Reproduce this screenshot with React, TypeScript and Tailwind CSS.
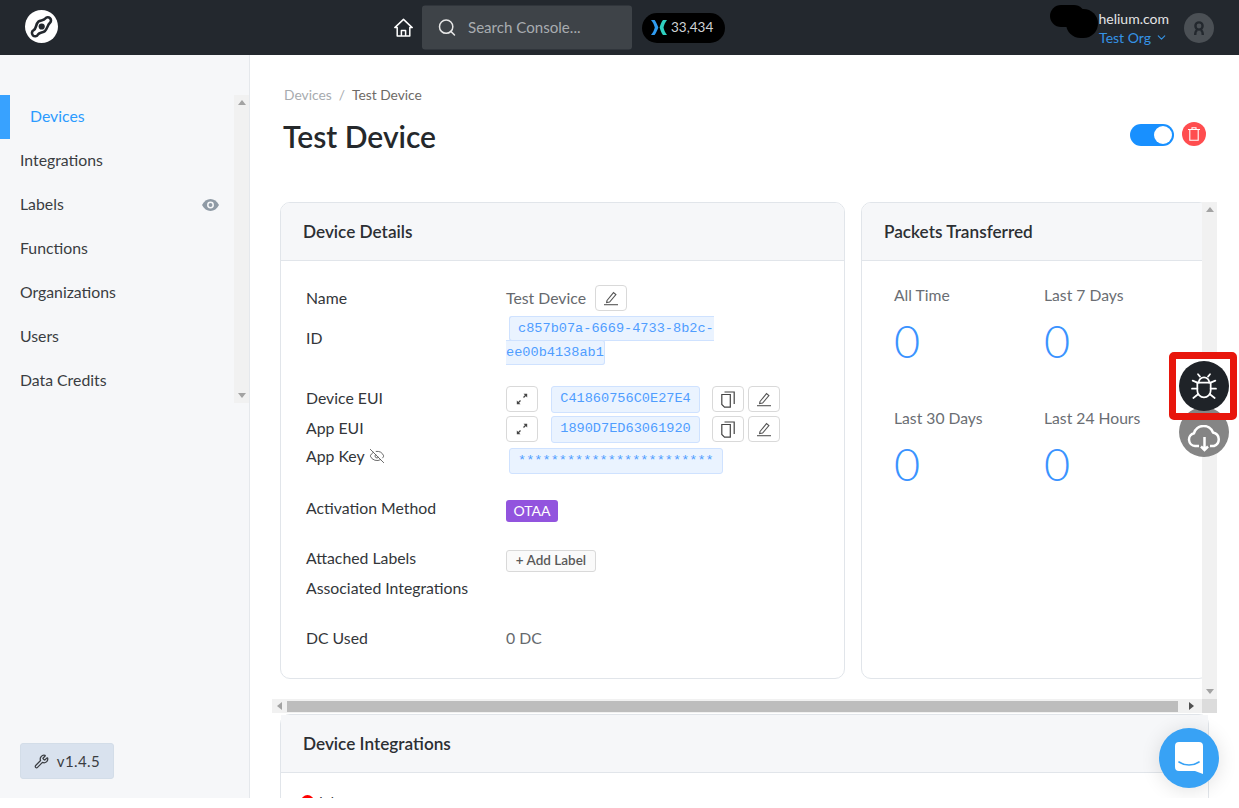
import React from "react";
import { Search, ChevronDown, EyeOff, Wrench } from "lucide-react";

const sans = "font-['Lato','Open_Sans',sans-serif]";

function Logo() {
  return (
    <svg width="33" height="33" viewBox="0 0 33 33">
      <circle cx="16.5" cy="16.5" r="16.5" fill="#fff" />
      <path
        d="M8.7 20.2C11.5 18.5 10.6 14 13.5 11.5C15.5 10 18.5 10.8 20.3 8.5A3.2 3.2 0 1 1 24.8 13C22.5 15 23 17.5 20 21C18 23 14.5 22.2 13 24.5A3.2 3.2 0 1 1 8.7 20.2Z"
        fill="none"
        stroke="#23282e"
        strokeWidth="2.6"
      />
      <circle cx="16.7" cy="16.5" r="3.1" fill="#23282e" />
    </svg>
  );
}

function HomeIcon() {
  return (
    <svg width="19" height="19" viewBox="0 0 19 19" fill="none" stroke="#fff" strokeWidth="1.5" strokeLinejoin="round">
      <path d="M.8 9.6 9.5 1.4l8.7 8.2h-2.4v8.4H3.2V9.6z" />
      <path d="M7.4 18v-5.5h4.2V18" />
    </svg>
  );
}

function DcLogo() {
  return (
    <svg width="16" height="15" viewBox="0 0 16 15">
      <path d="M0 0h3.6C5 1.6 6.4 5 7.4 7.5 6.4 10 5 13.4 3.6 15H0c2.2-2.6 3.2-5 3.8-7.5C3.2 5 2.2 2.6 0 0z" fill="#2f9bf0" />
      <path d="M16 0h-4C10.400 1.600 9.400 5 8.600 7.500 9.400 10 10.400 13.400 12 15h4c-2-2.600-3-5-3.500-7.500C13 5 14 2.600 16 0z" fill="#2fd0c0" />
    </svg>
  );
}

function EyeSolid() {
  return (
    <svg width="17" height="12" viewBox="0 0 17 12">
      <path d="M0 6C2 2.200 5 0 8.500 0S15 2.200 17 6c-2 3.800-5 6-8.500 6S2 9.800 0 6z" fill="#8f9aa5" />
      <circle cx="8.500" cy="6" r="2.700" fill="none" stroke="#f6f7f9" strokeWidth="1.500" />
    </svg>
  );
}

function NavItem({ label, active, eye }: { label: string; active?: boolean; eye?: boolean }) {
  return (
    <div className={`flex h-[44px] items-center justify-between text-[15.8px] ${active ? "border-l-[10px] border-[#38a2ff] pl-[20px] text-[#2b9bff]" : "pl-[20px] text-[#3a3d42]"}`}>
      <span className="pb-[3px]">{label}</span>
      {eye ? <span className="mr-[15px]"><EyeSolid /></span> : null}
    </div>
  );
}

function IconBtn({ children }: { children: React.ReactNode }) {
  return (
    <div className="flex h-[26px] w-[32px] shrink-0 items-center justify-center rounded-[4px] border border-[#d9d9d9] bg-white text-[#444]">
      {children}
    </div>
  );
}

function EditIcon() {
  return (
    <svg width="16" height="16" viewBox="0 0 16 16" fill="none" stroke="#555" strokeWidth="1.1">
      <path d="M4 10.500 10.500 2.600l2.400 2L6.600 12l-3 .6z" />
      <path d="M1 14.700h14" />
    </svg>
  );
}

function CopyIcon() {
  return (
    <svg width="14" height="17" viewBox="0 0 14 17" fill="none" stroke="#444" strokeWidth="1.2">
      <path d="M.8 3.500h8.500v12.700H3.500L.8 13.500z" />
      <path d="M3.500 1h9.700v12" />
    </svg>
  );
}

function ExpandIcon() {
  return (
    <svg width="12" height="12" viewBox="0 0 12 12" fill="#444" stroke="#444" strokeWidth="1.300">
      <path d="M7.500 4.500 10 2" />
      <path d="M7.500 .8H11.200V4.500z" stroke="none" />
      <path d="M4.500 7.500 2 10" />
      <path d="M4.500 11.200H.8V7.500z" stroke="none" />
    </svg>
  );
}

function Code({ children }: { children: React.ReactNode }) {
  return (
    <span className="flex h-[27px] w-[149px] items-center justify-center rounded-[3px] border border-[#cfe2ff] bg-[#eaf3ff] font-['Liberation_Mono',monospace] text-[13.6px] text-[#4f9dff]">
      {children}
    </span>
  );
}

function Row({ label, h, mt, lift, children }: { label: React.ReactNode; h: string; mt?: string; lift?: boolean; children?: React.ReactNode }) {
  return (
    <div className={`flex items-center ${h} ${mt ?? ""}`}>
      <div className={`w-[200px] shrink-0 text-[15.8px] text-[#33363a] ${lift ? "pb-[2px]" : ""}`}>{label}</div>
      <div className="flex min-w-0 flex-1 items-center">{children}</div>
    </div>
  );
}

function EuiRow({ label, value, mt }: { label: string; value: string; mt?: string }) {
  return (
    <Row label={label} h="h-[30px]" mt={mt} lift>
      <IconBtn><ExpandIcon /></IconBtn>
      <div className="ml-[13px]"><Code>{value}</Code></div>
      <div className="ml-[12px] flex gap-[4px]">
        <IconBtn><CopyIcon /></IconBtn>
        <IconBtn><EditIcon /></IconBtn>
      </div>
    </Row>
  );
}

function Stat({ label }: { label: string }) {
  return (
    <div>
      <div className="text-[15.7px] leading-[20px] text-[#6a6e73]">{label}</div>
      <div className="mt-[6px] text-[45px] font-light leading-[60px] text-[#3a93ff]">0</div>
    </div>
  );
}

function Arrow({ d }: { d: "up" | "down" | "left" | "right" }) {
  const cls = {
    up: "border-x-[4px] border-b-[5px] border-x-transparent border-b-[#a3a3a3]",
    down: "border-x-[4px] border-t-[5px] border-x-transparent border-t-[#a3a3a3]",
    left: "border-y-[4px] border-r-[5px] border-y-transparent border-r-[#a3a3a3]",
    right: "border-y-[4px] border-l-[5px] border-y-transparent border-l-[#505050]",
  }[d];
  return <div className={`h-0 w-0 ${cls}`} />;
}

function CardHeader({ children }: { children: React.ReactNode }) {
  return (
    <div className="flex h-[58px] items-center border-b border-[#e1e5ea] bg-[#f6f7f9] pl-[22px] text-[17.2px] font-semibold text-[#2c2f33]">
      {children}
    </div>
  );
}

export default function App() {
  return (
    <div className={`relative flex h-[798px] w-full flex-col overflow-hidden bg-white ${sans}`}>
      <header className="flex h-[55px] shrink-0 items-center bg-[#23282e]">
        <div className="ml-[25px] h-[33px] w-[33px] -translate-y-[1px]"><Logo /></div>
        <div className="ml-[336px] h-[19px] w-[19px]"><HomeIcon /></div>
        <div className="ml-[9px] flex h-[44px] w-[210px] -translate-y-[0.5px] items-center rounded-[3px] bg-[#3e4348] pl-[15px] text-[15.1px] text-[#a8acb0]">
          <Search size={20} strokeWidth={1.8} className="mr-[11px] text-[#e6e6e6]" />
          <span>Search Console...</span>
        </div>
        <div className="ml-[10px] flex h-[30px] w-[83px] items-center rounded-full bg-black pl-[9px] text-[13.5px] text-[#cfd2d5]">
          <DcLogo />
          <span className="ml-[4px]">33,434</span>
        </div>
        <div className="ml-auto flex flex-col items-end text-[14px] leading-[19px]">
          <span className="text-[#e3e4e6]">helium.com</span>
          <span className="mr-[1px] flex items-center text-[#3593e6]">Test Org<ChevronDown size={13} className="ml-[4px]" /></span>
        </div>
        <div className="ml-[15px] mr-[25px] flex h-[30px] w-[30px] items-center justify-center rounded-full bg-[#4b5055]">
          <svg width="14" height="16" viewBox="0 0 14 16" fill="none" stroke="#23282e" strokeWidth="2.400">
            <circle cx="7" cy="6" r="3.600" />
            <path d="M3.200 15c0-3 1-4.500 2-5M10.800 15c0-3-1-4.500-2-5" />
          </svg>
        </div>
      </header>

      <div className="flex min-h-0 flex-1">
        <aside className="relative flex w-[250px] shrink-0 flex-col border-r border-[#e5e8ec] bg-[#f6f7f9]">
          <div className="mt-[40px] flex">
            <nav className="w-[234px] shrink-0">
              <NavItem label="Devices" active />
              <NavItem label="Integrations" />
              <NavItem label="Labels" eye />
              <NavItem label="Functions" />
              <NavItem label="Organizations" />
              <NavItem label="Users" />
              <NavItem label="Data Credits" />
            </nav>
            <div className="flex h-[308px] w-[15px] flex-col items-center justify-between bg-[#f1f1f1] py-[5px]">
              <Arrow d="up" />
              <Arrow d="down" />
            </div>
          </div>
          <div className="mt-auto mb-[19px] ml-[20px] flex h-[36px] w-[94px] items-center justify-center rounded-[3px] border border-[#d3dde8] bg-[#d9e2ee] text-[15px] tracking-[0.4px] text-[#3a3d42]">
            <Wrench size={15} className="mr-[8px]" />
            v1.4.5
          </div>
        </aside>

        <main className="min-w-0 flex-1 overflow-hidden">
          <div className="ml-[33px] mr-[33px] flex items-start justify-between pt-[31px]">
            <div>
              <div className="ml-[1px] flex h-[18px] items-center text-[13.8px] text-[#a7abaf]">
                Devices<span className="mx-[7px]">/</span><span className="text-[#6e6a66]">Test Device</span>
              </div>
              <h1 className="mt-[12px] text-[30px] font-semibold leading-[40px] text-[#25282b]">Test Device</h1>
            </div>
            <div className="mt-[36px] flex items-start gap-[8px]">
              <div className="mt-[2px] flex h-[22px] w-[44px] items-center justify-end rounded-full bg-[#1890ff] pr-[2px]">
                <div className="h-[18px] w-[18px] rounded-full bg-white" />
              </div>
              <div className="flex h-[24px] w-[24px] items-center justify-center rounded-full bg-[#ff4d4f]">
                <svg width="12" height="14" viewBox="0 0 12 14" fill="none" stroke="#fff" strokeWidth="1.100">
                  <path d="M0 2.500h12M4 2.500V.7h4v1.800M1.800 2.500v10.800h8.400V2.500" />
                </svg>
              </div>
            </div>
          </div>

          <div className="mt-[46px] ml-[22px] w-[945px]">
            <div className="flex h-[497px]">
              <div className="flex min-w-0 flex-1 gap-[16px] overflow-hidden pl-[8px]">
                <section className="h-[477px] w-[565px] shrink-0 overflow-hidden rounded-[10px] border border-[#e1e5ea] bg-white">
                  <CardHeader>Device Details</CardHeader>
                  <div className="pl-[25px] pr-[24px] pt-[22px]">
                    <Row label="Name" h="h-[30px]">
                      <span className="mr-[9px] text-[15.8px] text-[#66696d]">Test Device</span>
                      <IconBtn><EditIcon /></IconBtn>
                    </Row>
                    <Row label="ID" h="h-[52px]" lift>
                      <div className="mt-[4px] w-[208px] break-words font-['Liberation_Mono',monospace] text-[13.6px] leading-[24px]">
                        <span className="ml-[3px] rounded-[3px] border border-[#cfe2ff] bg-[#eaf3ff] py-[4px] pl-[8px] text-[#4f9dff]">c857b07a-6669-4733-8b2c-ee00b4138ab1</span>
                      </div>
                    </Row>
                    <EuiRow label="Device EUI" value="C41860756C0E27E4" mt="mt-[19px]" />
                    <EuiRow label="App EUI" value="1890D7ED63061920" />
                    <div className="flex h-[30px] items-start">
                      <div className="flex h-[24px] w-[200px] shrink-0 items-center text-[15.8px] text-[#33363a]">
                        App Key<EyeOff size={16} strokeWidth={1.3} className="ml-[4px] text-[#555]" />
                      </div>
                      <div className="mt-[4px] ml-[3px] flex h-[26px] w-[214px] items-center rounded-[3px] border border-[#cfe2ff] bg-[#eaf3ff] pl-[8px] font-['Liberation_Mono',monospace] text-[13.6px] text-[#4f9dff]">
                        ************************
                      </div>
                    </div>
                    <Row label="Activation Method" h="h-[30px]" mt="mt-[20px]" lift>
                      <span className="mt-[3px] flex h-[22px] w-[52px] items-center justify-center rounded-[3px] bg-[#9254de] text-[14px] text-white">OTAA</span>
                    </Row>
                    <Row label="Attached Labels" h="h-[30px]" mt="mt-[20px]" lift>
                      <span className="mt-[3px] flex h-[22px] w-[90px] items-center justify-center rounded-[3px] border border-[#d9d9d9] bg-[#fafafa] text-[13.5px] font-semibold text-[#595959]">+ Add Label</span>
                    </Row>
                    <Row label="Associated Integrations" h="h-[30px]" lift />
                    <Row label="DC Used" h="h-[30px]" mt="mt-[20px]" lift>
                      <span className="pb-[2px] text-[15.8px] text-[#66696d]">0 DC</span>
                    </Row>
                  </div>
                </section>
                <section className="h-[477px] w-[348px] shrink-0 overflow-hidden rounded-[10px] border border-[#e1e5ea] bg-white">
                  <CardHeader>Packets Transferred</CardHeader>
                  <div className="grid grid-cols-[150px_150px] gap-y-[37px] pl-[32px] pt-[24px]">
                    <Stat label="All Time" />
                    <Stat label="Last 7 Days" />
                    <Stat label="Last 30 Days" />
                    <Stat label="Last 24 Hours" />
                  </div>
                </section>
              </div>
              <div className="flex w-[15px] shrink-0 flex-col items-center justify-between bg-[#f1f1f1] py-[5px]">
                <Arrow d="up" />
                <Arrow d="down" />
              </div>
            </div>
            <div className="flex h-[14px] items-center bg-[#f1f1f1]">
              <div className="flex w-[15px] justify-center"><Arrow d="left" /></div>
              <div className="h-[11px] w-[891px] bg-[#bdbdbd]" />
              <div className="ml-[6px] flex w-[15px] justify-center"><Arrow d="right" /></div>
              <div className="ml-auto h-full w-[15px] bg-[#dcdcdc]" />
            </div>
          </div>

          <section className="mt-[1px] ml-[30px] mr-[30px] rounded-t-[10px] border border-[#e1e5ea] bg-white">
            <CardHeader>Device Integrations</CardHeader>
            <div className="flex items-start pl-[20px] pt-[22px] text-[14px] leading-[14px] text-[#33363a]">
              <span className="mr-[5px] h-[13px] w-[13px] shrink-0 rounded-full bg-[#ff0000]" />
              Inbox
            </div>
          </section>
        </main>
      </div>

      <div className="absolute left-[1169px] top-[352px] h-[68px] w-[68px] bg-white" />
      <div className="absolute left-[1179px] top-[407px] flex h-[50px] w-[50px] items-center justify-center rounded-full bg-[#858585]">
        <svg width="35" height="27" viewBox="0 0 35 27" fill="none" stroke="#fff" strokeWidth="2.500" className="mt-[13px]">
          <path d="M12 21H8A6.500 6.500 0 0 1 7 8.200 10 10 0 0 1 26 7.500 7 7 0 0 1 27 21h-4" />
          <path d="M17.500 12v13M14 21.500l3.500 3.500 3.500-3.500" />
        </svg>
      </div>
      <div className="absolute left-[1179px] top-[361px] flex h-[50px] w-[50px] items-center justify-center rounded-full bg-[#1f2328]">
        <svg width="32" height="32" viewBox="0 0 24 24" fill="none" stroke="#fff" strokeWidth="1.300" strokeLinecap="round">
          <path d="M7 9.500h10v6a5 5 0 0 1-10 0z" />
          <path d="M8 9.500a4 4 0 0 1 8 0" />
          <path d="M9 5 7.500 3.200M15 5l1.500-1.800" />
          <path d="M7 9.500 3.500 8M17 9.500 20.500 8M7 14H3M17 14h4M7.800 18 4 21M16.200 18 20 21" />
        </svg>
      </div>
      <div className="absolute left-[1169px] top-[352px] h-[68px] w-[68px] rounded-[5px] border-[7px] border-[#e8160c]" />
      <div className="absolute left-[1159px] top-[728px] flex h-[60px] w-[60px] items-center justify-center rounded-full bg-[#38a2f5] shadow-[0_2px_20px_rgba(0,0,0,0.12)]">
        <svg width="28" height="32" viewBox="0 0 28 32">
          <path d="M4 0h20a4 4 0 0 1 4 4v28l-8-3H4a4 4 0 0 1-4-4V4a4 4 0 0 1 4-4z" fill="#fff" />
          <path d="M4 20c6 4 14 4 20 0" fill="none" stroke="#38a2f5" strokeWidth="1.600" strokeLinecap="round" />
        </svg>
      </div>
      <div className="absolute left-[1050px] top-[5px] h-[22px] w-[35px] rounded-full bg-black" />
      <div className="absolute left-[1066px] top-[9px] h-[29px] w-[32px] rounded-full bg-black" />
    </div>
  );
}
